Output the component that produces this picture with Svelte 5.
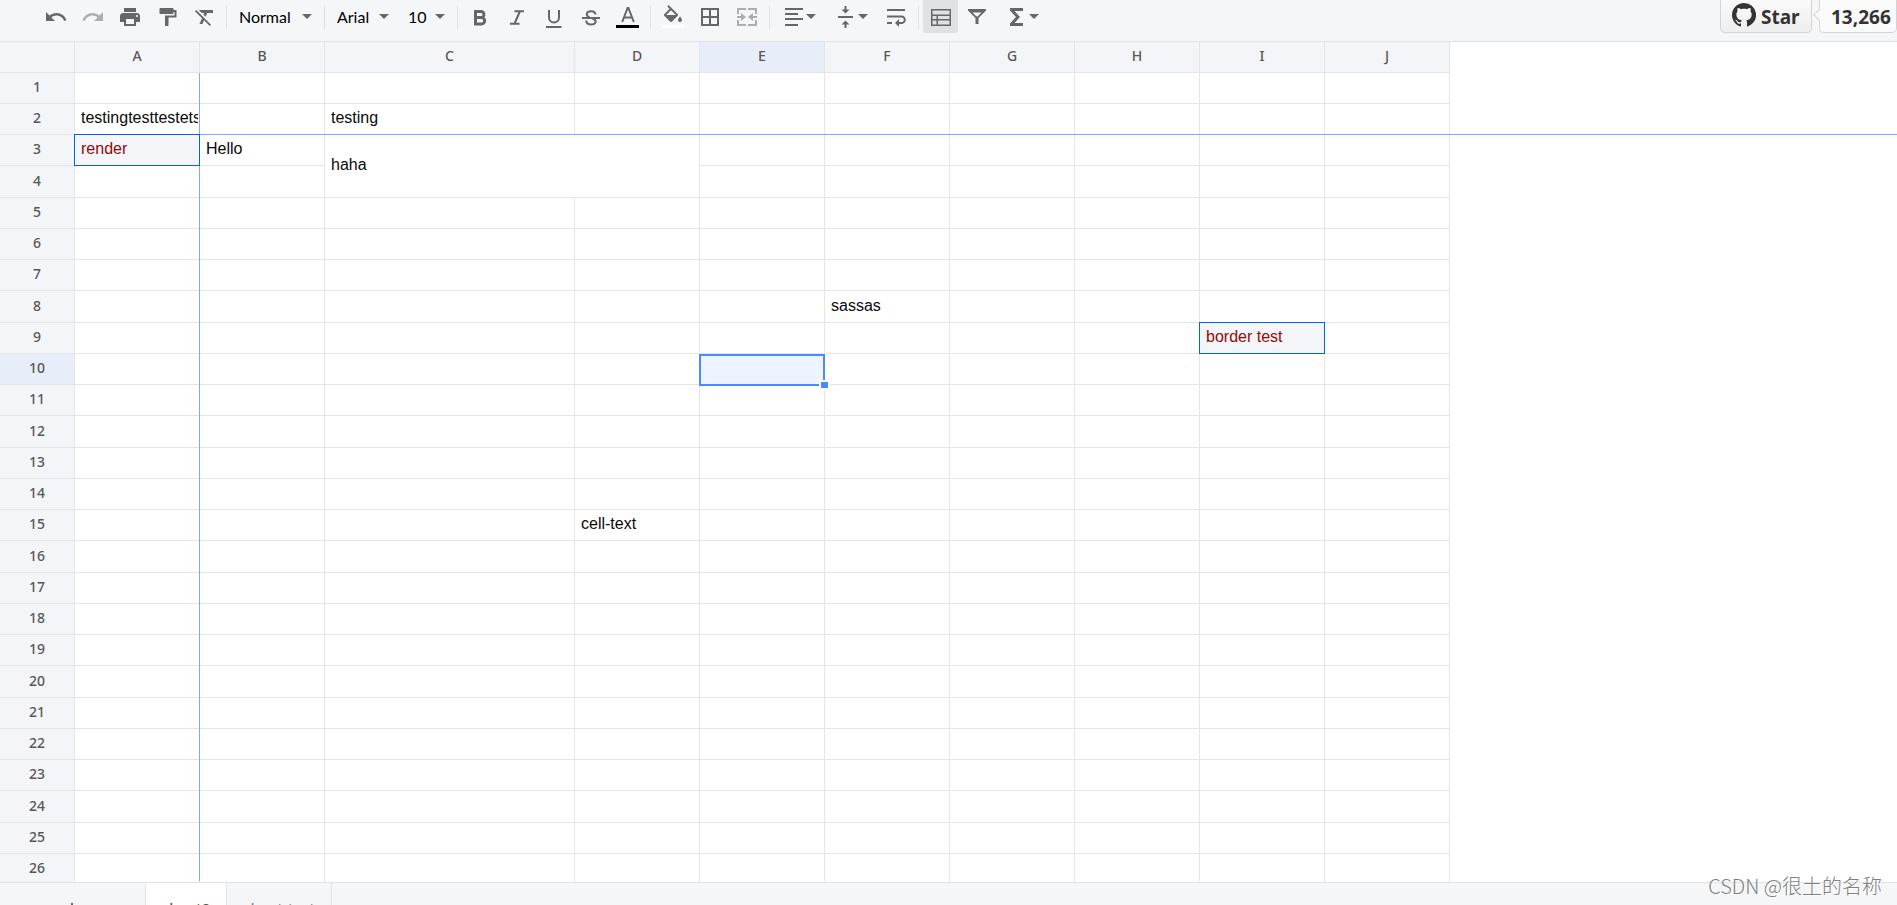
<script lang="ts">
	interface Cell {
		text?: string;
		kind?: string;
		colspan?: number;
		rowspan?: number;
	}

	const columns = ['A', 'B', 'C', 'D', 'E', 'F', 'G', 'H', 'I', 'J'];
	const rows = Array.from({ length: 27 }, (_, i) => i + 1);

	const cells: Record<string, Cell> = {
		A2: { text: 'testingtesttestets' },
		C2: { text: 'testing' },
		A3: { text: 'render', kind: 'boxed' },
		B3: { text: 'Hello' },
		C3: { text: 'haha', colspan: 2, rowspan: 2 },
		F8: { text: 'sassas' },
		I9: { text: 'border test', kind: 'boxed' },
		D15: { text: 'cell-text' }
	};
	const merged = ['D3', 'C4', 'D4'];

	let selectedCol = $state('E');
	let selectedRow = $state(10);

	function select(col: string, row: number) {
		selectedCol = col;
		selectedRow = row;
	}
</script>

{#snippet arrow()}
	<svg class="arrow" viewBox="0 0 10 5" aria-hidden="true"><path d="M0 0h10L5 5z" /></svg>
{/snippet}

<div class="sheet">
	<div class="toolbar">
		<div class="tools">
			<button aria-label="Undo">
				<svg viewBox="0 0 24 24"><path d="M12.5 8c-2.65 0-5.05.99-6.9 2.6L2 7v9h9l-3.62-3.62c1.39-1.16 3.16-1.88 5.12-1.88 3.54 0 6.55 2.31 7.6 5.5l2.37-.78C21.08 11.03 17.15 8 12.5 8z" /></svg>
			</button>
			<button aria-label="Redo" disabled>
				<svg viewBox="0 0 24 24"><path d="M18.4 10.6C16.55 8.99 14.15 8 11.5 8c-4.65 0-8.58 3.03-9.96 7.22L3.9 16c1.05-3.19 4.05-5.5 7.6-5.5 1.95 0 3.73.72 5.12 1.88L13 16h9V7l-3.6 3.6z" /></svg>
			</button>
			<button aria-label="Print">
				<svg viewBox="0 0 24 24"><path d="M19 8H5c-1.66 0-3 1.34-3 3v6h4v4h12v-4h4v-6c0-1.66-1.34-3-3-3zm-3 11H8v-5h8v5zm3-7c-.55 0-1-.45-1-1s.45-1 1-1 1 .45 1 1-.45 1-1 1zm-1-9H6v4h12V3z" /></svg>
			</button>
			<button aria-label="Paint format">
				<svg viewBox="0 0 24 24"><path d="M18.5 5V4c0-.5-.4-1-1-1h-12c-.5 0-1 .5-1 1v4c0 .6.5 1 1 1h12c.6 0 1-.4 1-1V7h1v3.500H10V20c0 .6.4 1 1 1h1.500c.5 0 1-.4 1-1v-7.500H21.500V5z" /></svg>
			</button>
			<button aria-label="Clear format">
				<svg viewBox="0 0 24 24"><path d="M4.270 5L3 6.270l6.970 6.970L7.500 19h3l1.570-3.660L17.730 21 19 19.730 4.550 5.270zM7 5v.18L9.820 8h2.400l-.72 1.680 2.100 2.100L15.210 8H21V5z" /></svg>
			</button>
			<span class="divider"></span>
			<label class="dropdown style">
				<select aria-label="Format"><option>Normal</option></select>
				{@render arrow()}
			</label>
			<span class="divider"></span>
			<label class="dropdown font">
				<select aria-label="Font"><option>Arial</option></select>
				{@render arrow()}
			</label>
			<label class="dropdown size">
				<select aria-label="Font size"><option>10</option></select>
				{@render arrow()}
			</label>
			<span class="divider"></span>
			<button aria-label="Bold">
				<svg viewBox="0 0 24 24"><path class="line thick" d="M7.500 6.500h5.500a3 3 0 0 1 0 6H7.500zM7.500 12.500h6a3.200 3.200 0 0 1 0 6.400H7.500z" /></svg>
			</button>
			<button aria-label="Italic">
				<svg viewBox="0 0 24 24"><path class="line" d="M9.500 6.200h9.500M5 18.800h9.500M14.800 6.500L9.600 18.500" /></svg>
			</button>
			<button aria-label="Underline">
				<svg viewBox="0 0 24 24"><path class="line" d="M7 5v7.500a5 5 0 0 0 10 0V5" /><path d="M4 21h15.500v2H4z" /></svg>
			</button>
			<button aria-label="Strike">
				<svg viewBox="0 0 24 24"><path class="line" d="M16.500 9.500C16.300 5.200 7.800 5 7.800 9.200c0 1.600 1.200 2.500 2.800 3M13.500 13.500c5.200 1.800 3.400 6-1.300 6-3 0-4.900-1.500-4.900-4" /><path d="M3 12h18v2H3z" /></svg>
			</button>
			<button aria-label="Text color">
				<svg viewBox="0 0 24 24"><path class="line" d="M6.200 17L11.600 3h.8l5.400 14M8 12.500h8" /><path class="ink" d="M0 20h23v3H0z" /></svg>
			</button>
			<span class="divider"></span>
			<button aria-label="Fill color">
				<svg viewBox="0 0 24 24"><path d="M16.560 8.940L7.620 0 6.210 1.410l2.380 2.380-5.150 5.150c-.59.59-.59 1.540 0 2.120l5.500 5.500c.29.29.68.44 1.060.44s.77-.15 1.060-.44l5.500-5.500c.59-.58.59-1.530 0-2.120zM5.210 10L10 5.210 14.790 10zM19 11.500s-2 2.170-2 3.500a2 2 0 0 0 4 0c0-1.330-2-3.500-2-3.500z" /><path class="paper" d="M1 20h22v3H1z" /></svg>
			</button>
			<button aria-label="Borders">
				<svg viewBox="0 0 24 24"><path d="M3 3v18h18V3zm8 16H5v-6h6zm0-8H5V5h6zm8 8h-6v-6h6zm0-8h-6V5h6z" /></svg>
			</button>
			<button aria-label="Merge cells" disabled>
				<svg viewBox="0 0 24 24"><path d="M2 3h9v2H4v4H2zM13 3h9v6h-2V5h-7zM2 15h2v4h7v2H2zM20 15h2v6h-9v-2h7zM2 11h4V8l5 4-5 4v-3H2zM22 11h-4V8l-5 4 5 4v-3h4z" /></svg>
			</button>
			<span class="divider"></span>
			<button class="wide" aria-label="Horizontal align">
				<svg viewBox="0 0 24 24"><path d="M3 3h18v2H3zM3 8h13v2H3zM3 13h18v2H3zM3 19h13v2H3z" /></svg>
				{@render arrow()}
			</button>
			<button class="wide" aria-label="Vertical align">
				<svg viewBox="0 0 24 24"><path d="M4 11h15v2H4zM10.500 1h2v3.500h3L11.500 8.500 7.500 4.500h3zM10.500 23h2v-3.500h3L11.500 15.500 7.500 19.500h3z" /></svg>
				{@render arrow()}
			</button>
			<button aria-label="Text wrapping">
				<svg viewBox="0 0 24 24"><path d="M3 4h18v2H3zM3 17h5v2H3z" /><path class="line" d="M3 11.500h14.500a3.300 3.300 0 0 1 0 6.600H13" /><path d="M15 14v8l-4-4z" /></svg>
			</button>
			<span class="divider"></span>
			<button class="active" aria-label="Freeze cell">
				<svg viewBox="0 0 24 24"><path d="M2 4h20v17H2zm1.500 1.500v4h17v-4zm0 5.500v3h4v-3zm5.500 0v3h11.500v-3zm-5.500 4.500v4h4v-4zm5.500 0v4h11.500v-4z" fill-rule="evenodd" /></svg>
			</button>
			<button aria-label="Filter">
				<svg viewBox="0 0 24 24"><path d="M2 4h18v1.500L12.500 13v6h-3v-6L2 5.500zm4.500 3.500l4 4h1l4-4z" fill-rule="evenodd" /></svg>
			</button>
			<button class="wide" aria-label="Functions">
				<svg viewBox="0 0 24 24"><path d="M5 3h13v3H9.500l5.500 6-5.500 6H18v3H5v-2.500l6-6.500-6-6.500z" /></svg>
				{@render arrow()}
			</button>
		</div>
		<div class="github">
			<a class="star" href="#star">
				<svg viewBox="0 0 16 16" aria-hidden="true"><path d="M8 0C3.580 0 0 3.580 0 8c0 3.540 2.290 6.530 5.470 7.590.4.070.55-.17.55-.38 0-.19-.01-.82-.01-1.490-2.010.37-2.530-.49-2.690-.94-.09-.23-.48-.94-.82-1.130-.28-.15-.68-.52-.01-.53.63-.01 1.080.58 1.230.82.72 1.210 1.870.87 2.330.66.070-.52.28-.87.51-1.070-1.780-.2-3.640-.89-3.640-3.950 0-.87.31-1.590.82-2.150-.08-.2-.36-1.020.08-2.120 0 0 .67-.21 2.200.82.64-.18 1.320-.27 2-.27s1.360.09 2 .27c1.530-1.040 2.200-.82 2.200-.82.44 1.100.16 1.920.08 2.120.51.56.82 1.270.82 2.150 0 3.070-1.870 3.750-3.650 3.950.29.25.54.73.54 1.480 0 1.070-.01 1.930-.01 2.200 0 .21.15.46.55.38A8 8 0 0 0 8 0z" /></svg>
				Star
			</a>
			<a class="count" href="#stargazers">13,266</a>
		</div>
	</div>

	<div class="grid">
		<table>
			<colgroup>
				<col class="index" />
				{#each columns as col}
					<col class:double={col === 'C'} />
				{/each}
			</colgroup>
			<thead>
				<tr>
					<th></th>
					{#each columns as col}
						<th scope="col" class:current={col === selectedCol}>{col}</th>
					{/each}
				</tr>
			</thead>
			<tbody>
				{#each rows as row}
					<tr>
						<th scope="row" class:current={row === selectedRow}>{row}</th>
						{#each columns as col}
							{@const cell = cells[col + row]}
							{#if !merged.includes(col + row)}
								<td
									class={cell?.kind}
									colspan={cell?.colspan}
									rowspan={cell?.rowspan}
									onclick={() => select(col, row)}
								>
									{#if cell?.text}<div class="text">{cell.text}</div>{/if}
									{#if col === selectedCol && row === selectedRow}
										<div class="selection"><i></i></div>
									{/if}
								</td>
							{/if}
						{/each}
					</tr>
				{/each}
			</tbody>
		</table>
		<div class="freeze-row"></div>
		<div class="freeze-col"></div>
	</div>

	<div class="bottombar">
		<div class="menu">
			<button aria-label="Add sheet">
				<svg viewBox="0 0 24 24"><path d="M19 13h-6v6h-2v-6H5v-2h6V5h2v6h6z" /></svg>
			</button>
		</div>
		<button class="tab open">sheet2</button>
		<button class="tab">sheet-test</button>
	</div>
	<div class="watermark">CSDN @很土的名称</div>
</div>

<style>
	:global(body) {
		margin: 0;
		background: #fff;
	}

	.sheet {
		position: relative;
		display: flex;
		flex-direction: column;
		height: 100vh;
		overflow: hidden;
		font-family: Lato, 'Noto Sans', sans-serif;
	}

	button,
	select {
		border: 0;
		padding: 0;
		background: none;
		font: inherit;
		color: inherit;
	}

	svg {
		display: block;
		width: 24px;
		height: 24px;
		flex: none;
		fill: #676767;
	}

	.toolbar {
		display: flex;
		justify-content: space-between;
		height: 41px;
		flex: none;
		padding-left: 37px;
		background: #f5f6f7;
		border-bottom: 1px solid #e0e2e4;
	}

	.tools,
	.github {
		display: flex;
		height: 33px;
		flex: none;
	}

	.tools button {
		display: flex;
		align-items: center;
		justify-content: center;
		width: 35px;
		margin: 0 1px;
		border-radius: 0 0 3px 3px;
	}

	.tools button.wide {
		width: 50px;
	}

	.tools button.active {
		background: #e0e1e2;
	}

	.tools button:disabled {
		opacity: 0.5;
	}

	.tools .arrow {
		width: 10px;
		height: 5px;
	}

	.line {
		fill: none;
		stroke: #676767;
		stroke-width: 2;
	}

	.line.thick {
		stroke-width: 3;
	}

	.ink {
		fill: #000;
	}

	.paper {
		fill: #fff;
	}

	.divider {
		width: 1px;
		height: 23px;
		margin: 6px 3px 0 4px;
		background: #dfe0e1;
	}

	.dropdown {
		display: flex;
		align-items: center;
		justify-content: space-between;
		box-sizing: border-box;
		padding: 0 8px 0 9px;
		font-size: 16px;
	}

	.dropdown select {
		appearance: none;
		color: #000;
	}

	.style {
		width: 90px;
	}

	.font {
		width: 72px;
		padding-right: 11px;
	}

	.size {
		width: 53px;
		padding-left: 8px;
	}

	.github {
		gap: 7px;
		font: bold 19px/28px 'Noto Sans', sans-serif;
	}

	.github a {
		box-sizing: border-box;
		color: #333;
		text-decoration: none;
		border: 1px solid #d4d4d4;
		border-top: 0;
		border-radius: 0 0 5px 5px;
	}

	.star {
		display: flex;
		gap: 5px;
		width: 92px;
		padding: 3px 0 0 11px;
		background: linear-gradient(#fafafa, #eee);
	}

	.star svg {
		fill: #333;
	}

	.count {
		position: relative;
		width: 78px;
		padding: 3px 0 0 11px;
		background: #fafafa;
		border-right: 0;
	}

	.count::before {
		content: '';
		position: absolute;
		left: -5px;
		top: 11px;
		width: 7px;
		height: 7px;
		background: #fafafa;
		border: solid #d4d4d4;
		border-width: 0 0 1px 1px;
		transform: rotate(45deg);
	}

	.grid {
		position: relative;
		flex: 1;
		min-height: 0;
		overflow: hidden;
	}

	table {
		width: 1450px;
		table-layout: fixed;
		border-collapse: separate;
		border-spacing: 0;
	}

	col {
		width: 125px;
	}

	col.index {
		width: 75px;
	}

	col.double {
		width: 250px;
	}

	tr {
		height: 31px;
	}

	tbody tr:nth-child(4n) {
		height: 32px;
	}

	th,
	td {
		position: relative;
		padding: 0 0 2px;
		border: solid #e5e5e5;
		border-width: 0 1px 1px 0;
	}

	th {
		background: #f4f5f8;
		color: #585757;
		font: 500 14px/18px 'Noto Sans', sans-serif;
	}

	th.current {
		background: #e7edf9;
	}

	.text {
		margin: 0 1px 0 6px;
		overflow: hidden;
		white-space: nowrap;
		font: 16px/18px 'Liberation Sans', Arial, sans-serif;
		color: #0a0a0a;
	}

	.boxed {
		background: #f4f5f8;
	}

	.boxed .text {
		color: #900b09;
	}

	.boxed::after {
		content: '';
		position: absolute;
		inset: -1px;
		border: 1px solid #0366d6;
		z-index: 1;
	}

	.selection {
		position: absolute;
		inset: 0 -1px -2px;
		border: 2px solid #4b89ff;
		background: rgba(75, 137, 255, 0.1);
		z-index: 1;
	}

	.selection i {
		position: absolute;
		right: -7px;
		bottom: -6px;
		width: 7px;
		height: 6px;
		background: #4b89ff;
		border: 2px solid #fff;
	}

	.freeze-row,
	.freeze-col {
		position: absolute;
		background: #80aaf2;
	}

	.freeze-row {
		left: 75px;
		right: 0;
		top: 92px;
		height: 1px;
	}

	.freeze-col {
		left: 199px;
		top: 31px;
		bottom: 1px;
		width: 1px;
	}

	.bottombar {
		display: flex;
		height: 22px;
		flex: none;
		overflow: hidden;
		border-top: 1px solid #e0e2e4;
		background: #f5f6f7;
	}

	.menu {
		width: 145px;
		border-right: 1px solid #e5e5e5;
	}

	.menu button {
		margin: 15px 0 0 60px;
	}

	.tab {
		height: 51px;
		padding: 0 16px;
		border-right: 1px solid #e5e5e5;
		font: 500 15px/51px 'Noto Sans', sans-serif;
		color: #80868b;
	}

	.tab.open {
		background: #fff;
		color: #585757;
	}

	.watermark {
		position: absolute;
		right: 15px;
		bottom: 6px;
		font: 300 20px/26px 'Noto Sans CJK SC', sans-serif;
		color: #808080;
		text-shadow: 1px 1px 0 #fff;
	}
</style>
